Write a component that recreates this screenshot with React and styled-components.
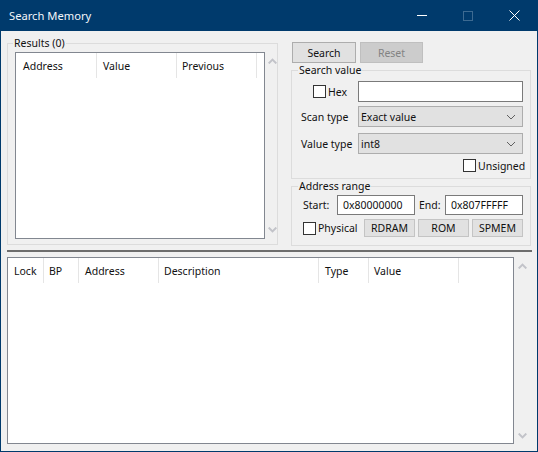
import React from 'react'
import styled, { createGlobalStyle } from 'styled-components'

const resultColumns = [
  { name: 'Address', width: 81, pad: 7 },
  { name: 'Value', width: 80, pad: 6 },
  { name: 'Previous', width: 80, pad: 5 },
]

const watchColumns = [
  { name: 'Lock', width: 36, pad: 6 },
  { name: 'BP', width: 35, pad: 5 },
  { name: 'Address', width: 80, pad: 6 },
  { name: 'Description', width: 160, pad: 5 },
  { name: 'Type', width: 50, pad: 6 },
  { name: 'Value', width: 90, pad: 5 },
]

const Global = createGlobalStyle`
  html, body {
    margin: 0;
    padding: 0;
    background: #f0f0f0;
  }
  * {
    box-sizing: border-box;
  }
`

const Window = styled.div`
  width: 538px;
  height: 452px;
  display: flex;
  flex-direction: column;
  overflow: hidden;
  background: #f0f0f0;
  border: 1px solid #003a6c;
  border-top: 0;
  font-family: 'Noto Sans', 'Open Sans', sans-serif;
  font-size: 10.5px;
  line-height: 16px;
  color: #111;
`

const TitleBar = styled.div`
  height: 31px;
  flex: none;
  display: flex;
  align-items: center;
  justify-content: space-between;
  padding-left: 8px;
  background: #003a6c;
  color: #f2f6fa;
  font-size: 11.2px;
`

const WindowControls = styled.div`
  display: flex;
  height: 100%;
`

const ControlButton = styled.div`
  width: 46px;
  display: flex;
  align-items: center;
  justify-content: center;

  svg {
    display: block;
  }
`

const Body = styled.div`
  flex: 1;
  display: flex;
  flex-direction: column;
  padding: 4px 6px 6px;
`

const TopRow = styled.div`
  display: flex;
  align-items: flex-start;
  gap: 13px;
`

const GroupBox = styled.fieldset`
  margin: 0;
  min-width: 0;
  padding: ${p => p.$padding};
  width: ${p => p.$width}px;
  border: 1px solid #dcdcdc;
`

const Legend = styled.legend`
  padding: 0 1px;
  margin-left: ${p => p.$left}px;
  line-height: 16px;
`

const ListRow = styled.div`
  display: flex;
`

const ListBox = styled.div`
  width: ${p => p.$width}px;
  height: ${p => p.$height}px;
  flex: none;
  background: #fff;
  border: 1px solid #828790;
`

const ListHeader = styled.div`
  display: flex;
  height: 25px;
`

const HeaderCell = styled.div`
  width: ${p => p.$width}px;
  flex: none;
  padding-left: ${p => p.$pad}px;
  display: flex;
  align-items: center;
  border-right: 1px solid #e5e5e5;
`

const ScrollTrack = styled.div`
  flex: 1;
  display: flex;
  flex-direction: column;
  align-items: center;
  justify-content: space-between;
  padding: 6px 0 6px ${p => p.$left || 0}px;
  color: #c2c3c9;

  svg {
    display: block;
  }
`

const RightColumn = styled.div`
  flex: 1;
  display: flex;
  flex-direction: column;
  padding-top: 7px;
`

const ButtonRow = styled.div`
  display: flex;
  gap: 4px;
  margin-left: 1px;
`

const PushButton = styled.div`
  width: ${p => p.$width}px;
  height: ${p => p.$height}px;
  display: flex;
  align-items: center;
  justify-content: center;
  background: ${p => (p.$disabled ? '#cccccc' : '#e1e1e1')};
  border: 1px solid ${p => (p.$disabled ? '#bfbfbf' : p.$soft ? '#c4c4c4' : '#adadad')};
  color: ${p => (p.$disabled ? '#838383' : 'inherit')};
`

const StackedGroup = styled(GroupBox)`
  margin-top: -1px;
`

const FormRow = styled.div`
  display: flex;
  align-items: center;
  height: ${p => p.$height}px;
  margin-bottom: ${p => p.$gap || 0}px;
  justify-content: ${p => p.$justify || 'flex-start'};
`

const RowLabel = styled.div`
  width: 66px;
  flex: none;
  padding-left: 9px;
`

const HexLabel = styled.label`
  width: 66px;
  flex: none;
  padding-left: 21px;
  display: flex;
  align-items: center;
  gap: 2px;
`

const CheckLabel = styled.label`
  display: flex;
  align-items: center;
  gap: 2px;
  flex: none;
  width: ${p => p.$width}px;
  margin-left: ${p => p.$left || 0}px;
`

const CheckBox = styled.input.attrs({ type: 'checkbox' })`
  appearance: none;
  margin: 0;
  width: 13px;
  height: 13px;
  flex: none;
  background: #fff;
  border: 1px solid #333;
`

const TextField = styled.input.attrs({ type: 'text', readOnly: true })`
  width: ${p => p.$width}px;
  height: ${p => p.$height}px;
  flex: none;
  padding: 0 0 0 5px;
  border: 1px solid #7a7a7a;
  outline: 0;
  background: #fff;
  font: inherit;
  color: inherit;
`

const Dropdown = styled.div`
  width: 165px;
  height: 21px;
  flex: none;
  display: flex;
  align-items: center;
  justify-content: space-between;
  padding: 0 6px 0 2px;
  background: #e1e1e1;
  border: 1px solid #adadad;

  svg {
    display: block;
  }
`

const RangeLabel = styled.div`
  flex: none;
  width: ${p => p.$width}px;
  padding-left: ${p => p.$left}px;
`

const RegionButtons = styled.div`
  display: flex;
  gap: 3px;
`

const Splitter = styled.div`
  height: 2px;
  flex: none;
  margin: 4px 0 5px;
  width: 525px;
  background: #6d6d6d;
`

const BottomRow = styled.div`
  flex: 1;
  display: flex;
`

const Chevron = ({ up }) => (
  <svg width="9" height="6" viewBox="0 0 9 6">
    <path
      d={up ? 'M.7 5.4 L4.5 1.6 L8.3 5.4' : 'M.7 .6 L4.5 4.4 L8.3 .6'}
      fill="none"
      stroke="currentColor"
      strokeWidth="2"
    />
  </svg>
)

const ComboArrow = () => (
  <svg width="10" height="6" viewBox="0 0 10 6">
    <path d="M1 1 L5 5 L9 1" fill="none" stroke="#606060" strokeWidth="1" />
  </svg>
)

const Scroller = ({ left }) => (
  <ScrollTrack $left={left}>
    <Chevron up />
    <Chevron />
  </ScrollTrack>
)

const Columns = ({ items }) => (
  <ListHeader>
    {items.map(col => (
      <HeaderCell key={col.name} $width={col.width} $pad={col.pad}>{col.name}</HeaderCell>
    ))}
  </ListHeader>
)

const App = () => {
  return (
    <Window>
      <Global />
      <TitleBar>
        Search Memory
        <WindowControls>
          <ControlButton>
            <svg width="10" height="1" viewBox="0 0 10 1">
              <path d="M0 .5 H10" stroke="#fff" />
            </svg>
          </ControlButton>
          <ControlButton>
            <svg width="10" height="10" viewBox="0 0 10 10">
              <rect x=".5" y=".5" width="9" height="9" fill="none" stroke="#3d6a91" />
            </svg>
          </ControlButton>
          <ControlButton>
            <svg width="11" height="11" viewBox="0 0 11 11">
              <path d="M.5 .5 L10.5 10.5 M10.5 .5 L.5 10.5" stroke="#fff" />
            </svg>
          </ControlButton>
        </WindowControls>
      </TitleBar>
      <Body>
        <TopRow>
          <GroupBox $width={272} $padding="1px 0 5px 7px">
            <Legend $left={-2}>Results (0)</Legend>
            <ListRow>
              <ListBox $width={250} $height={187}>
                <Columns items={resultColumns} />
              </ListBox>
              <Scroller left={3} />
            </ListRow>
          </GroupBox>
          <RightColumn>
            <ButtonRow>
              <PushButton $width={64} $height={21}>Search</PushButton>
              <PushButton $width={63} $height={21} $disabled>Reset</PushButton>
            </ButtonRow>
            <StackedGroup $width={240} $padding="3px 6px 5px 0">
              <Legend $left={6}>Search value</Legend>
              <FormRow $height={21} $gap={4}>
                <HexLabel><CheckBox />Hex</HexLabel>
                <TextField $width={165} $height={21} />
              </FormRow>
              <FormRow $height={21} $gap={6}>
                <RowLabel>Scan type</RowLabel>
                <Dropdown>Exact value<ComboArrow /></Dropdown>
              </FormRow>
              <FormRow $height={21} $gap={4}>
                <RowLabel>Value type</RowLabel>
                <Dropdown>int8<ComboArrow /></Dropdown>
              </FormRow>
              <FormRow $height={15} $justify="flex-end">
                <CheckLabel $width={61}><CheckBox />Unsigned</CheckLabel>
              </FormRow>
            </StackedGroup>
            <StackedGroup $width={240} $padding="1px 6px 8px 0">
              <Legend $left={6}>Address range</Legend>
              <FormRow $height={20} $gap={4}>
                <RangeLabel $width={45} $left={11}>Start:</RangeLabel>
                <TextField $width={78} $height={20} value="0x80000000" />
                <RangeLabel $width={30} $left={4}>End:</RangeLabel>
                <TextField $width={78} $height={20} value="0x807FFFFF" />
              </FormRow>
              <FormRow $height={18}>
                <CheckLabel $left={11} $width={61}><CheckBox />Physical</CheckLabel>
                <RegionButtons>
                  <PushButton $width={51} $height={18} $soft>RDRAM</PushButton>
                  <PushButton $width={51} $height={18} $soft>ROM</PushButton>
                  <PushButton $width={51} $height={18} $soft>SPMEM</PushButton>
                </RegionButtons>
              </FormRow>
            </StackedGroup>
          </RightColumn>
        </TopRow>
        <Splitter />
        <BottomRow>
          <ListBox $width={507} $height={187}>
            <Columns items={watchColumns} />
          </ListBox>
          <Scroller />
        </BottomRow>
      </Body>
    </Window>
  )
}

export default App
